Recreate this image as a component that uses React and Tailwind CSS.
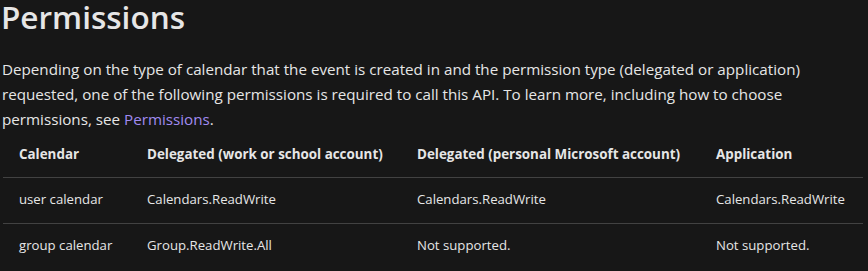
export default function App() {
  const rows = [
    ["user calendar", "Calendars.ReadWrite", "Calendars.ReadWrite", "Calendars.ReadWrite"],
    ["group calendar", "Group.ReadWrite.All", "Not supported.", "Not supported."],
  ];
  return (
    <div className="w-[868px] h-[271px] overflow-hidden bg-[#171717] text-[#e6e6e6] pl-[2px] font-['Open_Sans',sans-serif]">
      <h2 className="text-[31.5px] font-semibold leading-[34px] mb-[23px] -ml-[1px]">Permissions</h2>
      <p className="text-[15.2px] leading-[25px]">
        Depending on the type of calendar that the event is created in and the permission type (delegated or application)
        <br />
        requested, one of the following permissions is required to call this API. To learn more, including how to choose
        <br />
        permissions, see <a className="text-[#a08af0]">Permissions</a>.
      </p>
      <table className="ml-[1px] w-[860px] table-fixed border-collapse text-[13.2px]">
        <colgroup>
          <col className="w-[128px]" />
          <col className="w-[270px]" />
          <col className="w-[299px]" />
          <col className="w-[163px]" />
        </colgroup>
        <thead>
          <tr className="h-[45px] border-b border-[#424242]">
            <th className="px-4 text-left font-bold text-[13.4px]">Calendar</th>
            <th className="px-4 text-left font-bold text-[13.4px]">Delegated (work or school account)</th>
            <th className="px-4 text-left font-bold text-[13.4px]">Delegated (personal Microsoft account)</th>
            <th className="px-4 text-left font-bold text-[13.4px]">Application</th>
          </tr>
        </thead>
        <tbody>
          {rows.map((r, i) => (
            <tr key={i} className={"h-[46px] " + (i === 0 ? "border-b border-[#424242]" : "")}>
              {r.map((c, j) => (
                <td key={j} className="px-4 whitespace-nowrap">{c}</td>
              ))}
            </tr>
          ))}
        </tbody>
      </table>
    </div>
  );
}
